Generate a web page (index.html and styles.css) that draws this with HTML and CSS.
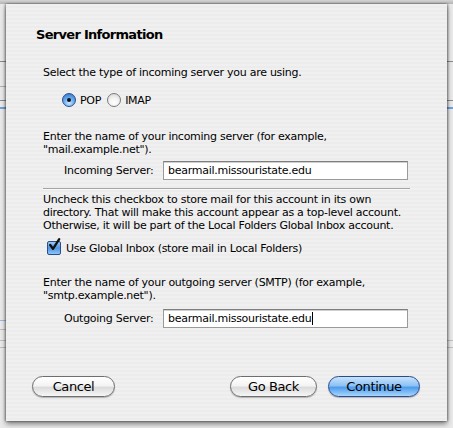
FILE: index.html
```html
<!DOCTYPE html>
<html>
<head>
<meta charset="utf-8">
<link rel="stylesheet" href="styles.css">
</head>
<body>
<div class="topbar"></div>
<div class="sheet">
  <h1 class="title">Server Information</h1>
  <p class="text first">Select the type of incoming server you are using.</p>
  <div class="radios">
    <span class="radio on"></span><span class="rlabel">POP</span>
    <span class="radio"></span><span class="rlabel">IMAP</span>
  </div>
  <p class="text para2">Enter the name of your incoming server (for example,<br>"mail.example.net").</p>
  <div class="field">
    <label class="flabel">Incoming Server:</label>
    <div class="input">bearmail.missouristate.edu</div>
  </div>
  <div class="sep"></div>
  <p class="text para3">Uncheck this checkbox to store mail for this account in its own<br>directory. That will make this account appear as a top-level account.<br>Otherwise, it will be part of the Local Folders Global Inbox account.</p>
  <div class="check">
    <span class="box"><svg width="14" height="14" viewBox="0 0 14 14"><path d="M3.2 7 L6 10.8 L12.2 1.2" fill="none" stroke="#111" stroke-width="2.3" stroke-linecap="round" stroke-linejoin="round"/></svg></span>
    <span class="clabel">Use Global Inbox (store mail in Local Folders)</span>
  </div>
  <p class="text para4">Enter the name of your outgoing server (SMTP) (for example,<br>"smtp.example.net").</p>
  <div class="field field2">
    <label class="flabel">Outgoing Server:</label>
    <div class="input">bearmail.missouristate.edu<span class="caret"></span></div>
  </div>
  <div class="buttons">
    <button class="btn cancel">Cancel</button>
    <div class="spacer"></div>
    <button class="btn back">Go Back</button>
    <button class="btn primary">Continue</button>
  </div>
</div>
</body>
</html>
```
FILE: styles.css
```css
html, body {
  margin: 0;
  padding: 0;
}
body {
  width: 453px;
  height: 428px;
  overflow: hidden;
  font-family: "DejaVu Sans", "Noto Sans", sans-serif;
  color: #000;
  background:
    linear-gradient(#8a8a8a, #8a8a8a) 0 61px / 100% 1px no-repeat,
    linear-gradient(#b0b0b0, #b0b0b0) 0 86px / 6px 1px no-repeat,
    linear-gradient(#8a8a8a, #8a8a8a) 0 100px / 100% 1px no-repeat,
    linear-gradient(#6fa0d8, #6fa0d8) 0 107px / 100% 2px no-repeat,
    linear-gradient(#9ab8dc, #9ab8dc) 0 320px / 6px 1px no-repeat,
    linear-gradient(#bdbdbd, #bdbdbd) 0 329px / 6px 1px no-repeat,
    linear-gradient(#bdbdbd, #bdbdbd) 0 340px / 100% 1px no-repeat,
    linear-gradient(#bdbdbd, #bdbdbd) 0 347px / 100% 1px no-repeat,
    #e9e9e9;
}
.topbar {
  height: 4px;
  background: linear-gradient(#d4d4d4, #b4b4b4);
}
.sheet {
  margin-left: 6px;
  width: 441px;
  height: 417px;
  box-sizing: border-box;
  padding: 0 0 0 37px;
  background: repeating-linear-gradient(#f0f0f0 0, #f0f0f0 2px, #ececec 2px, #ececec 4px);
  box-shadow: -1px 0 2px rgba(0,0,0,0.35), 1px 0 2px rgba(0,0,0,0.35), 0 3px 5px rgba(0,0,0,0.45);
  font-size: 11px;
  letter-spacing: -0.27px;
}
.title {
  margin: 0;
  padding-top: 23px;
  font-size: 13px;
  font-weight: bold;
  line-height: 16px;
  margin-left: -7px;
  letter-spacing: -0.7px;
}
.text {
  margin: 0;
  line-height: 13px;
  white-space: nowrap;
}
.first { margin-top: 23px; }
.radios {
  display: flex;
  align-items: center;
  margin-top: 14px;
  margin-left: 19px;
  height: 14px;
}
.radio {
  width: 14px;
  height: 14px;
  border-radius: 50%;
  box-sizing: border-box;
  border: 1px solid #7a7a7a;
  background: radial-gradient(circle at 50% 70%, #ffffff 0, #f2f2f2 45%, #cfcfcf 100%);
  position: relative;
}
.radio.on {
  border-color: #2d4d8c;
  background: radial-gradient(circle at 50% 75%, #cfe9ff 0, #6aaef0 45%, #2e6bc4 100%);
}
.radio.on::after {
  content: "";
  position: absolute;
  left: 4px;
  top: 4px;
  width: 4px;
  height: 4px;
  border-radius: 50%;
  background: #111;
}
.rlabel {
  margin-left: 4px;
  margin-right: 6px;
}
.para2 { margin-top: 23px; }
.field {
  display: flex;
  align-items: center;
  margin-top: 5px;
  margin-left: 21px;
}
.flabel {
  width: 99px;
}
.input {
  width: 245px;
  height: 19px;
  box-sizing: border-box;
  border: 1px solid #9a9a9a;
  border-top-color: #7d7d7d;
  background: #fff;
  padding: 2px 0 0 4px;
  line-height: 13px;
  font-size: 11px;
  box-shadow: inset 0 1px 0 #d0d0d0;
}
.sep {
  width: 367px;
  height: 1px;
  background: #a5a5a5;
  border-bottom: 1px solid #f8f8f8;
  margin-top: 8px;
}
.para3 { margin-top: 3px; }
.check {
  display: flex;
  align-items: center;
  margin-top: 9px;
  margin-left: 4px;
}
.box {
  width: 14px;
  height: 14px;
  box-sizing: border-box;
  border: 1px solid #2d4d8c;
  border-radius: 2px;
  background: linear-gradient(#9cc8f4, #4f95e2 50%, #8cc4f6);
  position: relative;
}
.box svg {
  position: absolute;
  left: -1px;
  top: -4px;
}
.clabel { margin-left: 5px; }
.para4 { margin-top: 21px; }
.field2 { margin-top: 7px; }
.caret {
  display: inline-block;
  width: 1px;
  height: 13px;
  background: #000;
  vertical-align: top;
  margin-left: 1px;
}
.buttons {
  display: flex;
  margin-top: 48px;
  margin-left: -11px;
  width: 388px;
}
.spacer { flex: 1; }
.btn {
  font-family: inherit;
  font-size: 13px;
  letter-spacing: -0.4px;
  height: 21px;
  border-radius: 11px;
  border: 1px solid #6e6e6e;
  padding: 0;
  color: #000;
  background: linear-gradient(#ffffff 0, #f4f4f4 45%, #dcdcdc 55%, #f6f6f6 100%);
  box-shadow: 0 1px 1px rgba(0,0,0,0.25);
}
.cancel { width: 83px; }
.back { width: 87px; }
.primary {
  width: 92px;
  margin-left: 11px;
  border-color: #2b4b8d;
  background: linear-gradient(#c9e3fb 0, #8ec2f4 45%, #4f9ded 55%, #a6d6fc 100%);
}
```
